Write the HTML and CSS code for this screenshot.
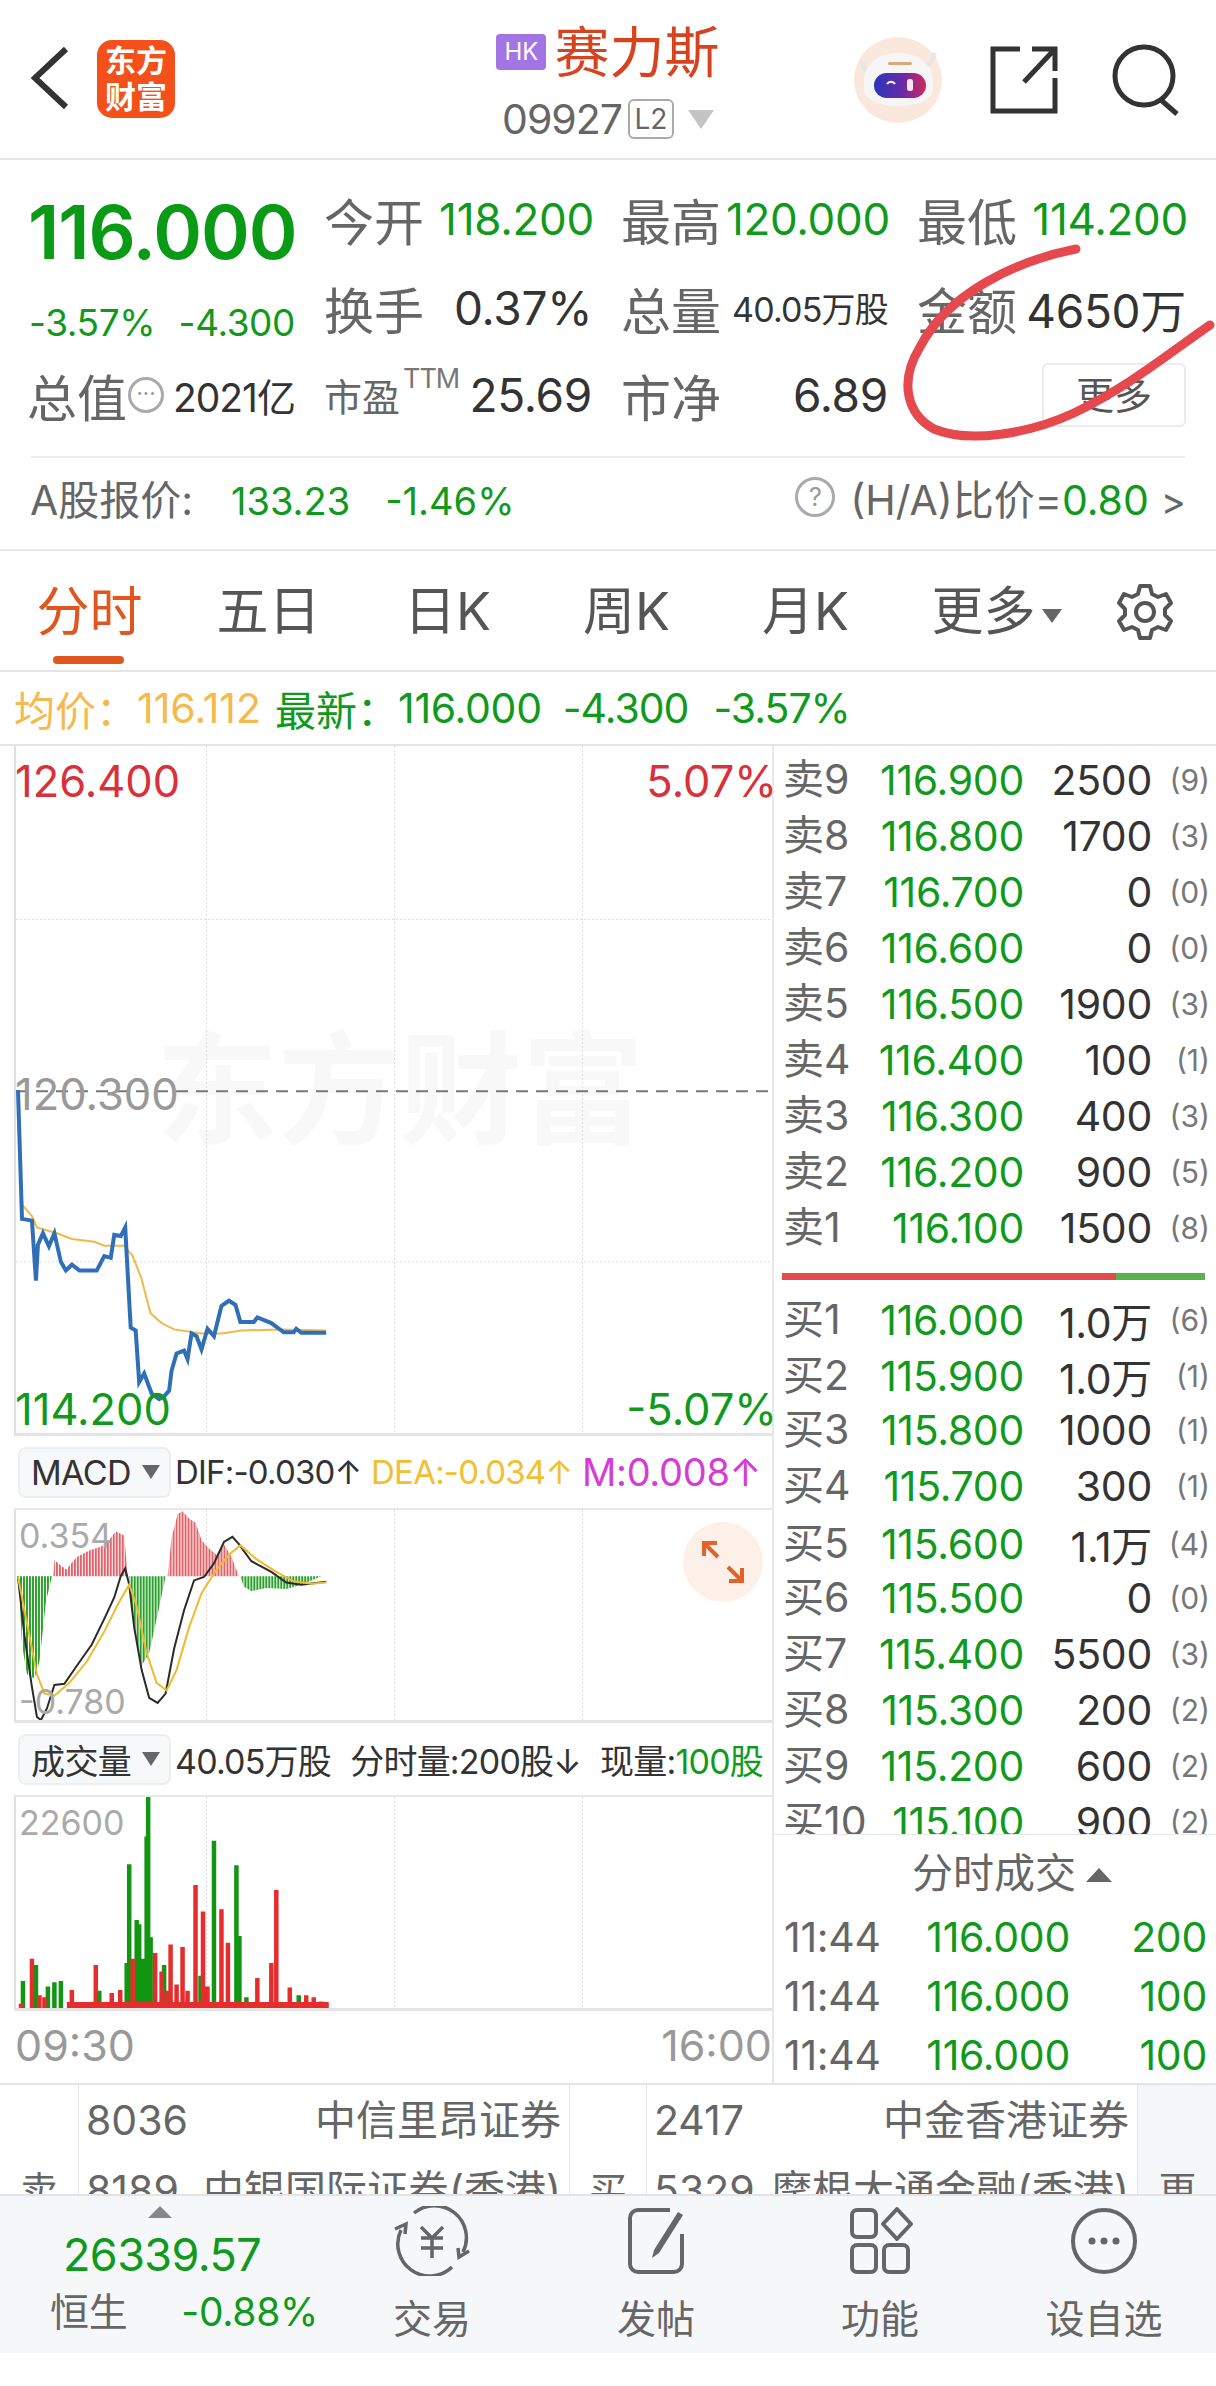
FILE: index.html
```html
<!DOCTYPE html>
<html lang="zh-CN">
  <head>
    <meta charset="UTF-8" />
    <title>赛力斯</title>
    <link rel="stylesheet" href="styles.css">
  </head>
  <body>
    <div class="page">
      <!-- 顶部标题 -->
      <header class="topbar">
        <div class="top-left">
          <svg class="back" width="40" height="64" viewBox="0 0 40 64"><path d="M36 3 5 32l31 29" fill="none" stroke="#333" stroke-width="6"/></svg>
          <div class="logo">东方<br />财富</div>
        </div>
        <div class="top-mid">
          <div class="name-line"><span class="hk">HK</span><span class="name">赛力斯</span></div>
          <div class="code-line"><span class="code">09927</span><span class="l2">L2</span><span class="tri-down"></span></div>
        </div>
        <div class="top-right">
          <svg class="robot" width="88" height="86" viewBox="0 0 88 86">
            <defs>
              <linearGradient id="visor" x1="0" y1="0" x2="1" y2="0">
                <stop offset="0" stop-color="#2b35b8"/>
                <stop offset="0.55" stop-color="#6a2aa8"/>
                <stop offset="1" stop-color="#d0285a"/>
              </linearGradient>
            </defs>
            <ellipse cx="44" cy="43" rx="44" ry="43" fill="#fbe8dd"/>
            <path d="M8 26c2 6 6 9 10 9M80 18c-1 6-5 10-10 11" fill="none" stroke="#e8e6e4" stroke-width="5" stroke-linecap="round"/>
            <path d="M10 44C10 26 26 16 44 16s35 10 35 28v8c0 10-15 17-35 17S10 62 10 52Z" fill="#f6f6f7"/>
            <rect x="34" y="25" width="24" height="3" rx="1.5" fill="#dca878"/>
            <rect x="20" y="36" width="52" height="25" rx="12.5" fill="url(#visor)"/>
            <path d="M33 47c2-3 6-3 8 0" fill="none" stroke="#fff" stroke-width="2"/>
            <rect x="53" y="42" width="6" height="12" rx="2.5" fill="#fbe6ee"/>
          </svg>
          <svg class="share" width="68" height="68" viewBox="0 0 68 68"><path d="M30 3H3v62h62V32M34 36 64 4M42 3h23v22" fill="none" stroke="#333" stroke-width="5"/></svg>
          <svg class="search" width="72" height="72" viewBox="0 0 72 72"><circle cx="33" cy="32" r="29" fill="none" stroke="#333" stroke-width="5"/><path d="m50 56 16 14" fill="none" stroke="#333" stroke-width="5"/></svg>
        </div>
      </header>

      <!-- 行情 -->
      <section class="quote">
        <div class="stats">
          <div class="last-price">116.000</div>
          <div class="cell"><span class="lab">今开</span><span class="val green">118.200</span></div>
          <div class="cell"><span class="lab">最高</span><span class="val green">120.000</span></div>
          <div class="cell"><span class="lab">最低</span><span class="val green">114.200</span></div>

          <div class="cell change green"><span>-3.57%</span><span>-4.300</span></div>
          <div class="cell"><span class="lab">换手</span><span class="val">0.37%</span></div>
          <div class="cell"><span class="lab">总量</span><span class="val small">40.05万股</span></div>
          <div class="cell"><span class="lab">金额</span><span class="val">4650万</span></div>

          <div class="cell"><span class="lab">总值</span><span class="dots-ico">···</span><span class="val mid">2021亿</span></div>
          <div class="cell"><span class="lab lab-s">市盈<sup>TTM</sup></span><span class="val">25.69</span></div>
          <div class="cell"><span class="lab">市净</span><span class="val">6.89</span></div>
          <div class="cell cell-end"><span class="more-btn">更多</span></div>
        </div>
        <div class="a-share">
          <div class="a-left"><span class="a-lab">A股报价:</span><span class="green">133.23</span><span class="green">-1.46%</span></div>
          <div class="a-right"><span class="q-ico">?</span><span>(H/A)比价=</span><span class="green">0.80</span><span class="gt">&gt;</span></div>
        </div>
        <svg class="scribble" width="330" height="200" viewBox="0 0 330 200"><path d="M190 6C130 18 62 50 34 104 12 140 22 172 48 186c34 14 92 6 140-16 54-26 90-56 136-88" fill="none" stroke="#e5484d" stroke-width="9" stroke-linecap="round"/></svg>
      </section>

      <!-- 周期切换 -->
      <nav class="tabs">
        <div class="tab active">分时</div>
        <div class="tab">五日</div>
        <div class="tab">日K</div>
        <div class="tab">周K</div>
        <div class="tab">月K</div>
        <div class="tab tab-more">更多<span class="tri-small"></span></div>
        <div class="tab gear">
          <svg width="60" height="60" viewBox="0 0 60 60"><path d="M25 4h10l2 8 6 3 8-3 5 9-6 6v6l6 6-5 9-8-3-6 3-2 8H25l-2-8-6-3-8 3-5-9 6-6v-6l-6-6 5-9 8 3 6-3Z" fill="none" stroke="#555" stroke-width="4" stroke-linejoin="round"/><circle cx="30" cy="30" r="9" fill="none" stroke="#555" stroke-width="4"/></svg>
        </div>
      </nav>

      <div class="info-line">
        <span class="gold">均价：</span><span class="gold p1">116.112</span>
        <span class="green p2">最新：</span><span class="green p3">116.000</span><span class="green p4">-4.300</span><span class="green p4">-3.57%</span>
      </div>

      <div class="board">
        <!-- 左侧图表 -->
        <div class="charts">
          <div class="plot plot-main">
            <div class="watermark">东方财富</div>
            <svg class="lines" viewBox="28 324 1516 1200" preserveAspectRatio="none">
              <path class="grid" d="M410 324V1524M787 324V1524M1164 324V1524M28 627H1544M28 1225H1544"/>
              <path class="mid-dash" d="M28 927H1544"/>
              <polyline class="avg" points="40,1125 60,1145 70,1165 110,1175 140,1185 185,1190 205,1197 245,1197 262,1215 280,1255 290,1290 298,1315 320,1332 345,1343 400,1350 440,1350 480,1345 560,1343 650,1345"/>
              <polyline class="price" points="32,925 40,1150 60,1153 68,1258 72,1195 82,1175 94,1198 105,1175 118,1225 128,1240 140,1230 155,1240 190,1240 205,1215 218,1218 225,1178 238,1180 247,1165 258,1340 268,1345 275,1435 285,1420 300,1455 315,1465 325,1460 335,1450 340,1415 350,1385 365,1380 372,1395 380,1350 390,1355 400,1378 412,1342 425,1355 432,1330 440,1302 455,1293 468,1300 478,1330 505,1330 512,1322 540,1332 565,1348 585,1348 590,1342 600,1349 650,1349"/>
            </svg>
            <span class="tag tl red">126.400</span><span class="tag tr red">5.07%</span>
            <span class="tag ml grey">120.300</span>
            <span class="tag bl green">114.200</span><span class="tag br green">-5.07%</span>
          </div>

          <div class="indi-bar">
            <span class="picker">MACD<i class="tri-picker"></i></span>
            <span class="indi-vals"><span class="dark">DIF:-0.030↑</span><span class="gold2">DEA:-0.034↑</span><span class="magenta">M:0.008↑</span></span>
          </div>
          <div class="plot plot-macd">
            <svg class="lines" viewBox="28 205 1516 492" preserveAspectRatio="none">
              <defs>
                <pattern id="redBars" width="6" height="10" patternUnits="userSpaceOnUse"><rect width="4" height="10" fill="#e0636a"/></pattern>
                <pattern id="greenBars" width="6" height="10" patternUnits="userSpaceOnUse"><rect width="4" height="10" fill="#2ba02b"/></pattern>
              </defs>
              <path class="grid" d="M410 205V697M787 205V697M1164 205V697"/>
              <polygon fill="url(#redBars)" points="103,360 105,322 118,335 130,345 135,335 150,315 175,300 200,290 215,275 228,255 245,265 252,360"/>
              <polygon fill="url(#redBars)" points="332,360 340,270 352,215 362,208 375,225 388,235 400,275 415,295 430,310 445,285 460,315 475,360"/>
              <polygon fill="url(#greenBars)" points="30,360 100,360 88,420 75,560 65,600 50,590 40,520 35,400"/>
              <polygon fill="url(#greenBars)" points="255,360 328,360 312,450 295,540 280,570 270,510 260,420"/>
              <polygon fill="url(#greenBars)" points="478,360 640,360 600,380 570,390 530,388 500,395 485,385"/>
              <polyline class="line-black" points="32,362 45,500 60,620 70,690 78,697 90,670 105,615 125,612 150,570 180,520 205,460 225,410 238,360 247,342 255,380 265,480 280,580 295,645 312,657 328,635 345,530 365,440 385,370 405,362 425,330 445,280 462,268 475,285 500,325 540,350 570,375 600,380 650,373"/>
              <polyline class="line-gold" points="32,362 50,470 70,590 85,635 105,640 135,610 170,560 205,490 235,420 255,380 270,430 290,540 310,610 330,628 350,580 375,480 400,400 430,345 455,310 478,288 510,320 550,350 585,372 620,378 650,375"/>
            </svg>
            <span class="tag small-top grey-l">0.354</span>
            <span class="tag small-bottom grey-l">-0.780</span>
            <span class="expand">
              <svg width="44" height="44" viewBox="0 0 44 44"><path d="M3 16V3h13M3 3l14 14M41 28v13H28M41 41 27 27" fill="none" stroke="#e2622a" stroke-width="4"/></svg>
            </span>
          </div>

          <div class="indi-bar vol-bar">
            <span class="picker">成交量<i class="tri-picker"></i></span>
            <span class="vol-vals"><span class="dark">40.05万股</span><span class="dark">分时量:200股↓</span><span class="dark">现量:<span class="green">100股</span></span></span>
          </div>
          <div class="plot plot-vol">
            <svg class="lines" viewBox="28 868 1516 492" preserveAspectRatio="none">
              <path class="grid" d="M410 868V1360M787 868V1360M1164 868V1360"/>
              <path class="vol-green" d="M42 1360V1297M68 1360V1260M92 1360V1310M105 1360V1300M118 1360V1297M195 1360V1320M250 1360V1255M255 1360V1025M270 1360V1155M275 1360V1165M282 1360V1245M290 1360V960M293 1360V868M298 1360V1195M325 1360V1260M398 1360V1285M425 1360V970M470 1360V1027M476 1360V1192M490 1360V1335M595 1360V1330"/>
              <path class="vol-red" d="M38 1360V1350M60 1360V1245M75 1360V1330M85 1360V1335M140 1360V1318M188 1360V1260M220 1360V1325M237 1360V1318M262 1360V1245M307 1360V1232M320 1360V1275M330 1360V1320M338 1360V1212M350 1360V1305M362 1360V1218M372 1360V1320M388 1360V1073M403 1360V1135M412 1360V1310M440 1360V1130M453 1360V1208M512 1360V1290M540 1360V1255M550 1360V1085M577 1360V1312M610 1360V1330M625 1360V1335M640 1360V1345M650 1360V1350"/>
              <rect x="130" y="1346" width="525" height="14" fill="#e52d2d"/>
            </svg>
            <span class="tag small-top grey-l">22600</span>
          </div>
          <div class="time-axis"><span>09:30</span><span>16:00</span></div>
        </div>

        <!-- 右侧五档 -->
        <aside class="side">
          <div class="book">
            <div class="row"><span class="lv">卖9</span><span class="pr">116.900</span><span class="qty">2500</span><span class="cnt">(9)</span></div>
            <div class="row"><span class="lv">卖8</span><span class="pr">116.800</span><span class="qty">1700</span><span class="cnt">(3)</span></div>
            <div class="row"><span class="lv">卖7</span><span class="pr">116.700</span><span class="qty">0</span><span class="cnt">(0)</span></div>
            <div class="row"><span class="lv">卖6</span><span class="pr">116.600</span><span class="qty">0</span><span class="cnt">(0)</span></div>
            <div class="row"><span class="lv">卖5</span><span class="pr">116.500</span><span class="qty">1900</span><span class="cnt">(3)</span></div>
            <div class="row"><span class="lv">卖4</span><span class="pr">116.400</span><span class="qty">100</span><span class="cnt">(1)</span></div>
            <div class="row"><span class="lv">卖3</span><span class="pr">116.300</span><span class="qty">400</span><span class="cnt">(3)</span></div>
            <div class="row"><span class="lv">卖2</span><span class="pr">116.200</span><span class="qty">900</span><span class="cnt">(5)</span></div>
            <div class="row"><span class="lv">卖1</span><span class="pr">116.100</span><span class="qty">1500</span><span class="cnt">(8)</span></div>
            <div class="ratio"><div class="ratio-red"></div><div class="ratio-green"></div></div>
            <div class="row"><span class="lv">买1</span><span class="pr">116.000</span><span class="qty">1.0万</span><span class="cnt">(6)</span></div>
            <div class="row"><span class="lv">买2</span><span class="pr">115.900</span><span class="qty">1.0万</span><span class="cnt">(1)</span></div>
            <div class="row"><span class="lv">买3</span><span class="pr">115.800</span><span class="qty">1000</span><span class="cnt">(1)</span></div>
            <div class="row"><span class="lv">买4</span><span class="pr">115.700</span><span class="qty">300</span><span class="cnt">(1)</span></div>
            <div class="row"><span class="lv">买5</span><span class="pr">115.600</span><span class="qty">1.1万</span><span class="cnt">(4)</span></div>
            <div class="row"><span class="lv">买6</span><span class="pr">115.500</span><span class="qty">0</span><span class="cnt">(0)</span></div>
            <div class="row"><span class="lv">买7</span><span class="pr">115.400</span><span class="qty">5500</span><span class="cnt">(3)</span></div>
            <div class="row"><span class="lv">买8</span><span class="pr">115.300</span><span class="qty">200</span><span class="cnt">(2)</span></div>
            <div class="row"><span class="lv">买9</span><span class="pr">115.200</span><span class="qty">600</span><span class="cnt">(2)</span></div>
            <div class="row"><span class="lv">买10</span><span class="pr">115.100</span><span class="qty">900</span><span class="cnt">(2)</span></div>
          </div>
          <div class="ticks">
            <div class="ticks-title">分时成交<span class="tri-up"></span></div>
            <div class="tick"><span class="t-time">11:44</span><span class="t-price">116.000</span><span class="t-vol">200</span></div>
            <div class="tick"><span class="t-time">11:44</span><span class="t-price">116.000</span><span class="t-vol">100</span></div>
            <div class="tick"><span class="t-time">11:44</span><span class="t-price">116.000</span><span class="t-vol">100</span></div>
          </div>
        </aside>
      </div>

      <!-- 经纪商 -->
      <div class="brokers">
        <div class="b-side">卖</div>
        <div class="b-col">
          <div class="b-row"><span>8036</span><span>中信里昂证券</span></div>
          <div class="b-row"><span>8189</span><span>中银国际证券(香港)</span></div>
        </div>
        <div class="b-side b-buy">买</div>
        <div class="b-col">
          <div class="b-row"><span>2417</span><span>中金香港证券</span></div>
          <div class="b-row"><span>5329</span><span>摩根大通金融(香港)</span></div>
        </div>
        <div class="b-side b-more">更</div>
      </div>

      <!-- 底部导航 -->
      <footer class="bottom">
        <div class="index-box">
          <span class="tri-index"></span>
          <div class="idx-num green">26339.57</div>
          <div class="idx-line"><span class="idx-name">恒生</span><span class="green">-0.88%</span></div>
        </div>
        <div class="nav-item">
          <svg width="76" height="70" viewBox="0 0 76 70"><path d="M20 7A32 32 0 0 1 69 46M58 61A32 32 0 0 1 7 24" fill="none" stroke="#666" stroke-width="3.500"/><path d="M75 45 65 51 64 42M1 23l11-5-1 10" fill="none" stroke="#666" stroke-width="3.500"/><path d="M27 21l11 11 11-11M38 32v20M27 32h22M27 42h22" fill="none" stroke="#666" stroke-width="3.500"/></svg>
          <span>交易</span>
        </div>
        <div class="nav-item">
          <svg width="76" height="70" viewBox="0 0 76 70"><path d="M52 4H20a8 8 0 0 0-8 8v46a8 8 0 0 0 8 8h36a8 8 0 0 0 8-8V28" fill="none" stroke="#666" stroke-width="4"/><path d="M36 44 60 6l5 3-24 38-7 5Z" fill="#666"/></svg>
          <span>发帖</span>
        </div>
        <div class="nav-item">
          <svg width="76" height="70" viewBox="0 0 76 70"><rect x="10" y="4" width="24" height="27" rx="5" fill="none" stroke="#666" stroke-width="4"/><path d="M55 3l14 15-14 15-14-15Z" fill="none" stroke="#666" stroke-width="4" stroke-linejoin="round"/><rect x="10" y="39" width="24" height="27" rx="5" fill="none" stroke="#666" stroke-width="4"/><rect x="42" y="39" width="24" height="27" rx="5" fill="none" stroke="#666" stroke-width="4"/></svg>
          <span>功能</span>
        </div>
        <div class="nav-item">
          <svg width="76" height="70" viewBox="0 0 76 70"><circle cx="38" cy="35" r="31" fill="none" stroke="#666" stroke-width="4"/><circle cx="26" cy="35" r="3.5" fill="#666"/><circle cx="38" cy="35" r="3.5" fill="#666"/><circle cx="50" cy="35" r="3.5" fill="#666"/></svg>
          <span>设自选</span>
        </div>
      </footer>
    </div>
  </body>
</html>
```

FILE: styles.css
```css
* {
  box-sizing: border-box;
}
html,
body {
  margin: 0;
  padding: 0;
  background: #fff;
}
.page {
  width: 1216px;
  height: 2386px;
  overflow: hidden;
  font-family: Inter, "Noto Sans CJK SC", sans-serif;
  color: #333;
}
.green {
  color: #0f9a1c;
}
.red {
  color: #d9303a;
}
.grey {
  color: #999;
}
.grey-l {
  color: #aaa;
}
.gold {
  color: #f5b94c;
}
.gold2 {
  color: #f0c030;
}
.magenta {
  color: #d63bd6;
}
.dark {
  color: #333;
}

/* 顶部标题 */
.topbar {
  height: 160px;
  display: grid;
  grid-template-columns: 1fr auto 1fr;
  border-bottom: 2px solid #e4e4e4;
}
.top-left {
  display: flex;
  align-items: center;
  padding: 0 0 0 30px;
  height: 160px;
}
.back {
  margin-top: -4px;
}
.logo {
  margin-left: 27px;
  margin-top: -2px;
  width: 78px;
  height: 78px;
  border-radius: 15px;
  background: #f4501a;
  color: #fff;
  font-size: 31px;
  font-weight: 700;
  line-height: 36px;
  text-align: center;
  padding-top: 3px;
}
.top-mid {
  display: flex;
  flex-direction: column;
  align-items: center;
  padding-top: 22px;
}
.name-line {
  display: flex;
  align-items: center;
  height: 60px;
}
.hk {
  width: 50px;
  height: 36px;
  border-radius: 4px;
  background: #a374e4;
  color: #fff;
  font-size: 24px;
  line-height: 36px;
  text-align: center;
}
.name {
  margin-left: 8px;
  font-size: 55px;
  line-height: 60px;
  color: #d8431f;
}
.code-line {
  display: flex;
  align-items: center;
  height: 42px;
  margin-top: 16px;
}
.code {
  font-size: 41px;
  letter-spacing: -1px;
  color: #666;
}
.l2 {
  margin-left: 6px;
  width: 46px;
  height: 40px;
  border: 2px solid #aaa;
  border-radius: 6px;
  font-size: 28px;
  line-height: 36px;
  text-align: center;
  color: #666;
}
.tri-down {
  margin-left: 14px;
  border-left: 13px solid transparent;
  border-right: 13px solid transparent;
  border-top: 19px solid #c4c4c4;
}
.top-right {
  display: flex;
  justify-content: flex-end;
  align-items: center;
  height: 160px;
  padding-right: 33px;
}
.robot {
  margin-right: 48px;
}
.share {
  margin-right: 53px;
}

/* 行情 */
.quote {
  position: relative;
  height: 391px;
  padding: 14px 30px 0;
  border-bottom: 2px solid #e8e8e8;
}
.stats {
  display: grid;
  grid-template-columns: 265px 265px 264px 266px;
  grid-template-rows: 90px 87px 87px;
  column-gap: 32px;
  height: 284px;
  border-bottom: 2px solid #f0f0f0;
}
.cell {
  display: flex;
  align-items: center;
  justify-content: space-between;
}
.last-price {
  font-size: 74px;
  font-weight: 600;
  letter-spacing: -1px;
  line-height: 90px;
  color: #0b9a16;
  margin: 13px 0 0 -2px;
}
.lab {
  margin-left: -3px;
  font-size: 50px;
  color: #666;
  white-space: nowrap;
}
.lab-s {
  font-size: 38px;
  position: relative;
}
.lab-s sup {
  position: absolute;
  left: 79px;
  top: -2px;
  font-size: 27px;
  line-height: 28px;
  letter-spacing: -1px;
  color: #777;
}
.val {
  font-size: 46px;
  letter-spacing: -0.3px;
  white-space: nowrap;
}
.val.green {
  font-size: 44px;
  margin-right: -2px;
}
.val.small {
  font-size: 34px;
  letter-spacing: -0.8px;
}
.val.mid {
  font-size: 39px;
  letter-spacing: -1px;
}
.change {
  font-size: 37px;
  padding-top: 30px;
  letter-spacing: -0.4px;
  margin-left: -1px;
}
.dots-ico {
  width: 36px;
  height: 36px;
  border: 3px solid #aaa;
  border-radius: 50%;
  font-size: 22px;
  line-height: 26px;
  text-align: center;
  color: #999;
  margin-left: -6px;
  margin-right: 2px;
  flex: none;
}
.cell-end {
  justify-content: flex-end;
}
.more-btn {
  width: 144px;
  height: 64px;
  border: 2px solid #ececec;
  border-radius: 6px;
  font-size: 38px;
  line-height: 60px;
  text-align: center;
  color: #555;
}
.a-share {
  display: flex;
  justify-content: space-between;
  align-items: center;
  height: 78px;
  font-size: 38px;
  color: #666;
}
.a-left {
  display: flex;
  align-items: baseline;
  gap: 35px;
}
.a-lab {
  width: 166px;
  font-size: 41px;
  white-space: nowrap;
}
.a-right {
  display: flex;
  align-items: baseline;
  font-size: 41px;
}
.q-ico {
  align-self: center;
  width: 40px;
  height: 40px;
  border: 3px solid #aaa;
  border-radius: 50%;
  font-size: 25px;
  line-height: 34px;
  text-align: center;
  color: #999;
  margin-right: 15px;
}
.gt {
  margin-left: 12px;
  font-size: 38px;
}
.scribble {
  position: absolute;
  left: 886px;
  top: 83px;
}

/* 周期切换 */
.tabs {
  display: grid;
  grid-template-columns: repeat(6, 179px) 142px;
  height: 121px;
  border-bottom: 2px solid #e4e4e4;
}
.tab {
  position: relative;
  font-size: 52px;
  line-height: 122px;
  text-align: center;
  color: #555;
}
.tab-more {
  padding-left: 24px;
  white-space: nowrap;
}
.tab.active {
  font-size: 53px;
  color: #e0561e;
}
.tab.active::after {
  content: "";
  position: absolute;
  left: 53px;
  bottom: 9px;
  width: 71px;
  height: 8px;
  border-radius: 4px;
  background: #e0561e;
}
.tri-small {
  display: inline-block;
  margin-left: 6px;
  vertical-align: middle;
  border-left: 10px solid transparent;
  border-right: 10px solid transparent;
  border-top: 14px solid #666;
}
.gear {
  display: flex;
  align-items: center;
  justify-content: center;
}
.info-line {
  display: flex;
  align-items: center;
  height: 74px;
  padding-left: 14px;
  font-size: 41px;
  white-space: nowrap;
  border-bottom: 2px solid #e4e4e4;
}
.p2 {
  margin-left: 14px;
}
.p3 {
  letter-spacing: -0.3px;
}
.p4 {
  margin-left: 21px;
  letter-spacing: -1px;
}
.p4 + .p4 {
  margin-left: 25px;
}

/* 图表 */
.board {
  display: flex;
  height: 1337px;
}
.charts {
  width: 779px;
  padding-left: 14px;
  border-right: 2px solid #e8e8e8;
}
.plot {
  position: relative;
  border-left: 2px solid #e0e0e0;
  border-bottom: 3px solid #e4e4e4;
}
.plot-main {
  height: 690px;
}
.plot-macd {
  height: 215px;
  border-top: 2px solid #e8e8e8;
}
.plot-vol {
  height: 216px;
  border-top: 2px solid #e8e8e8;
}
.lines {
  position: absolute;
  left: 0;
  top: 0;
  width: 100%;
  height: 100%;
}
.lines * {
  vector-effect: non-scaling-stroke;
}
.grid {
  fill: none;
  stroke: #dedede;
  stroke-width: 1;
  stroke-dasharray: 2 2;
}
.mid-dash {
  fill: none;
  stroke: #777;
  stroke-width: 2;
  stroke-dasharray: 12 8;
}
.avg {
  fill: none;
  stroke: #f2b84b;
  stroke-width: 2;
}
.price {
  fill: none;
  stroke: #2f6fb8;
  stroke-width: 4;
}
.line-black {
  fill: none;
  stroke: #2a2a2a;
  stroke-width: 2;
}
.line-gold {
  fill: none;
  stroke: #eebb2c;
  stroke-width: 2;
}
.vol-green {
  fill: none;
  stroke: #129612;
  stroke-width: 4.5;
}
.vol-red {
  fill: none;
  stroke: #e52d2d;
  stroke-width: 4.5;
}
.watermark {
  position: absolute;
  left: 140px;
  top: 274px;
  font-size: 122px;
  font-weight: 700;
  line-height: 140px;
  white-space: nowrap;
  color: #f8f8f8;
}
.tag {
  position: absolute;
  font-size: 43.5px;
  line-height: 52px;
}
.tl {
  left: -1px;
  top: 9px;
}
.tr {
  right: -5px;
  top: 9px;
}
.ml {
  left: -1px;
  top: 322px;
}
.bl {
  left: -1px;
  bottom: -2px;
}
.br {
  right: -5px;
  bottom: -2px;
}
.small-top {
  left: 3px;
  top: 4px;
  font-size: 34px;
  line-height: 44px;
}
.small-bottom {
  left: 3px;
  top: 170px;
  font-size: 34px;
  line-height: 44px;
}
.expand {
  position: absolute;
  left: 667px;
  top: 12px;
  width: 80px;
  height: 80px;
  border-radius: 50%;
  background: #fdf0e8;
  display: flex;
  align-items: center;
  justify-content: center;
}
.indi-bar {
  display: flex;
  align-items: center;
  height: 72px;
  padding-left: 4px;
  font-size: 34px;
  white-space: nowrap;
  letter-spacing: -0.6px;
}
.vol-bar {
  height: 72px;
}
.picker {
  display: flex;
  align-items: center;
  justify-content: space-between;
  flex: none;
  width: 153px;
  height: 51px;
  padding: 0 9px 0 11px;
  border: 2px solid #edeef0;
  border-radius: 8px;
  background: #f7f8fa;
  color: #333;
}
.tri-picker {
  border-left: 9px solid transparent;
  border-right: 9px solid transparent;
  border-top: 14px solid #666;
}
.indi-vals {
  display: flex;
  width: 586px;
  justify-content: space-between;
  margin-left: 4px;
  font-size: 33px;
  letter-spacing: -0.8px;
}
.indi-vals .magenta {
  font-size: 38px;
  line-height: 40px;
  letter-spacing: -0.3px;
}
.vol-vals {
  display: flex;
  width: 588px;
  justify-content: space-between;
  margin-left: 4px;
  letter-spacing: -0.8px;
}
.time-axis {
  display: flex;
  justify-content: space-between;
  align-items: center;
  height: 68px;
  font-size: 43px;
  color: #999;
}
.time-axis span:first-child {
  margin-left: 1px;
}

/* 五档 */
.side {
  flex: 1;
  padding-left: 7px;
  padding-right: 9px;
}
.book {
  height: 1089px;
  margin-left: -7px;
  margin-right: -9px;
  padding: 6px 6px 0 7px;
  overflow: hidden;
  border-bottom: 1px solid #e8e8e8;
}
.row {
  display: grid;
  grid-template-columns: 80px 163px 128px 58px;
  align-items: center;
  height: 56px;
  white-space: nowrap;
}
.lv {
  margin-left: 2px;
  font-size: 41px;
  line-height: 50px;
  padding-bottom: 3px;
  color: #666;
}
.pr {
  font-size: 41px;
  letter-spacing: -0.3px;
  color: #0f9a1c;
  text-align: right;
}
.qty {
  font-size: 41px;
  letter-spacing: -0.3px;
  text-align: right;
}
.cnt {
  font-size: 30px;
  color: #777;
  text-align: right;
}
.ratio {
  display: flex;
  height: 7px;
  margin: 17px 0 10px 1px;
  width: 423px;
}
.ratio-red {
  width: 334px;
  background: #e14b4b;
}
.ratio-green {
  flex: 1;
  background: #5bb24d;
}
.ticks-title {
  height: 72px;
  padding: 2px 0 0 36px;
  font-size: 41px;
  line-height: 72px;
  text-align: center;
  color: #666;
}
.tri-up {
  display: inline-block;
  margin-left: 10px;
  vertical-align: 6px;
  border-left: 13px solid transparent;
  border-right: 13px solid transparent;
  border-bottom: 14px solid #666;
}
.tick {
  display: grid;
  grid-template-columns: 100px 186px 137px;
  align-items: center;
  height: 59px;
  padding-left: 3px;
  font-size: 41px;
  letter-spacing: -0.3px;
}
.t-time {
  color: #666;
}
.t-price,
.t-vol {
  color: #0f9a1c;
  text-align: right;
}

/* 经纪商 */
.brokers {
  display: flex;
  height: 111px;
  overflow: hidden;
  border-top: 2px solid #e4e4e4;
  color: #666;
}
.b-side {
  flex: none;
  width: 78px;
  padding-top: 70px;
  font-size: 38px;
  line-height: 70px;
  text-align: center;
}
.b-buy {
  width: 76px;
}
.b-more {
  width: 79px;
  background: #f5f6f8;
}
.b-col {
  flex: none;
  width: 492px;
  padding: 0 8px 0 7px;
  border-left: 1px solid #e4e4e4;
  border-right: 1px solid #e4e4e4;
}
.b-row {
  display: flex;
  justify-content: space-between;
  height: 70px;
  font-size: 41px;
  line-height: 70px;
  white-space: nowrap;
}

/* 底部导航 */
.bottom {
  display: flex;
  height: 159px;
  background: #f5f7f9;
  border-top: 2px solid #e4e4e4;
}
.index-box {
  position: relative;
  width: 320px;
  padding: 33px 0 0 50px;
}
.tri-index {
  position: absolute;
  left: 148px;
  top: 10px;
  border-left: 12px solid transparent;
  border-right: 12px solid transparent;
  border-bottom: 12px solid #888;
}
.idx-num {
  margin-left: 13px;
  font-size: 45px;
  line-height: 52px;
  letter-spacing: -0.6px;
}
.idx-line {
  display: flex;
  justify-content: space-between;
  width: 268px;
  margin-top: 6px;
  font-size: 39px;
  line-height: 50px;
  letter-spacing: -0.3px;
}
.idx-name {
  color: #666;
}
.nav-item {
  display: flex;
  flex-direction: column;
  align-items: center;
  width: 224px;
  padding-top: 10px;
  font-size: 39px;
  line-height: 50px;
  color: #666;
}
.nav-item svg {
  margin-bottom: 18px;
}
```
